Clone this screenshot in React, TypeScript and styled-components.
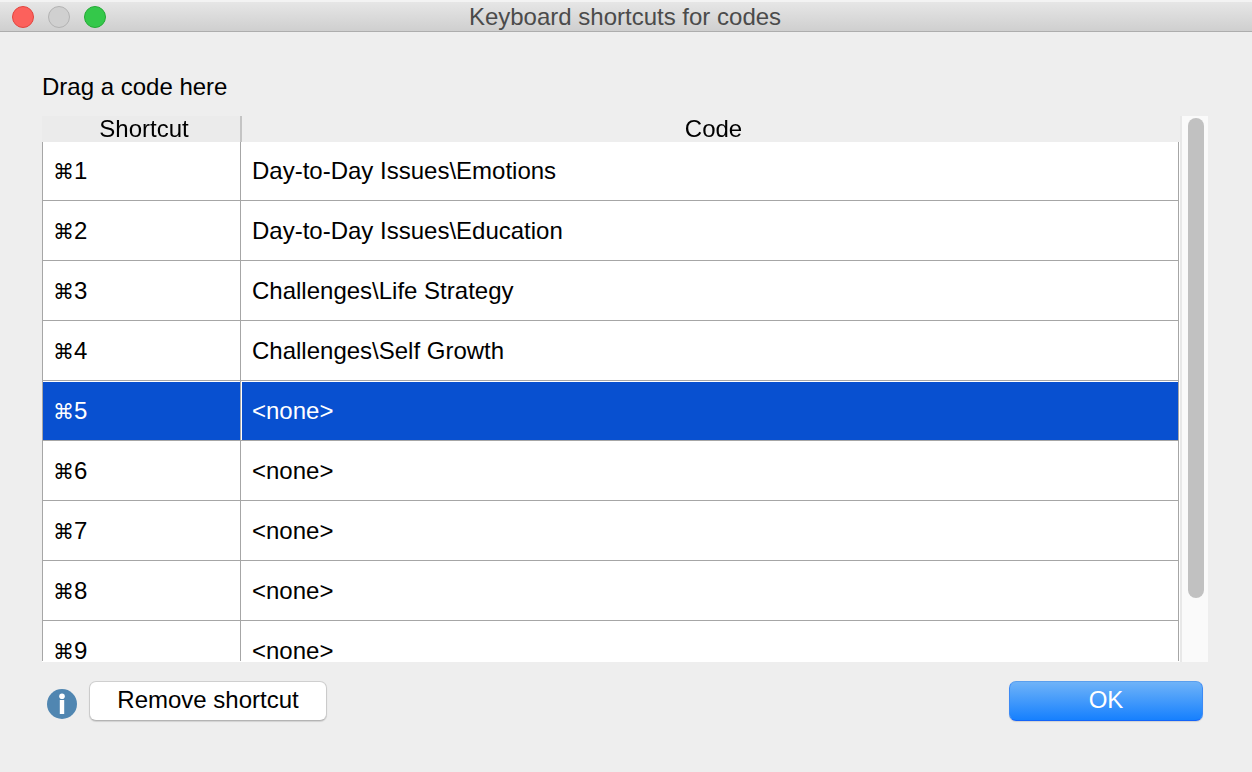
import React, { useState } from "react";
import styled, { createGlobalStyle } from "styled-components";

const GlobalStyle = createGlobalStyle`
  *, *::before, *::after { box-sizing: border-box; }
  body {
    margin: 0;
    background: #eeeeee;
    color: #000000;
    font-family: "Liberation Sans", Arial, "DejaVu Sans", sans-serif;
    font-size: 24px;
    line-height: 28px;
  }
  button { font: inherit; }
`;

const Dialog = styled.main`
  display: flex;
  flex-direction: column;
  height: 100vh;
  min-height: 400px;
`;

const TitleBar = styled.header`
  display: grid;
  grid-template-columns: 1fr auto 1fr;
  align-items: center;
  flex: none;
  height: 32px;
  padding: 0 14px 0 12px;
  border-top: 2px solid #f3f3f3;
  border-bottom: 1px solid #adadad;
  background: linear-gradient(#e6e6e6, #cfcfcf);
`;

const WindowControls = styled.div`
  display: flex;
  gap: 14px;
`;

const WindowControl = styled.button<{ $fill: string; $edge: string }>`
  width: 22px;
  height: 22px;
  padding: 0;
  border: 1px solid ${(p) => p.$edge};
  border-radius: 50%;
  background: ${(p) => p.$fill};
`;

const Title = styled.h1`
  margin: 0;
  color: #4b4b4b;
  font-size: 24px;
  font-weight: 400;
  line-height: 28px;
`;

const Content = styled.section`
  display: flex;
  flex: 1;
  flex-direction: column;
  min-height: 0;
  padding: 41px 44px 51px 42px;
`;

const Hint = styled.p`
  margin: 0 0 15px;
`;

const ListFrame = styled.div`
  display: flex;
  flex: 1;
  min-height: 0;
`;

const ListPane = styled.div`
  flex: 1;
  min-width: 0;
  overflow-y: auto;
  scrollbar-width: none;
  border-bottom: 1px solid #ffffff;
  background: linear-gradient(#eeeeee 26px, #ffffff 26px);
`;

const ScrollTrack = styled.div`
  flex: none;
  width: 28px;
  padding: 0 4px 0 6px;
  border-left: 2px solid #e8e8e8;
  background: #fafafa;
`;

const ScrollThumb = styled.div`
  height: 88%;
  margin-top: 2px;
  border-radius: 8px;
  background: #c1c1c1;
`;

const Table = styled.table`
  width: calc(100% - 1px);
  border-collapse: separate;
  border-spacing: 0;
  table-layout: fixed;
`;

const HeadCell = styled.th<{ $first?: boolean }>`
  position: sticky;
  top: 0;
  width: ${(p) => (p.$first ? "199px" : "auto")};
  height: 26px;
  padding: 0 0 0 6px;
  border: 0 solid #c4c4c4;
  border-width: ${(p) => (p.$first ? "0 1px 0 0" : "0 0 0 1px")};
  background: ${(p) => (p.$first ? "#ebebeb" : "#eeeeee")};
  font-weight: 400;
  line-height: 26px;
  text-align: center;
`;

const Cell = styled.td`
  height: 60px;
  padding: 1px 11px 0;
  border: 0 solid #a6a6a6;
  border-width: 0 1px 1px 0;
  box-shadow: inset 1px 1px #ffffff;

  &:first-child {
    padding-left: 10px;
    border-left-width: 1px;
    box-shadow: inset 0 1px #ffffff;
  }
`;

const Row = styled.tr<{ $selected: boolean }>`
  background: ${(p) => (p.$selected ? "#0850d0" : "#ffffff")};
  color: ${(p) => (p.$selected ? "#ffffff" : "#000000")};

  &:first-child ${Cell} {
    height: 59px;
    padding-top: 0;
  }
`;

const CommandKey = styled.span`
  font-family: "DejaVu Sans", sans-serif;
  font-size: 21px;
`;

const Footer = styled.footer`
  display: flex;
  align-items: center;
  flex: none;
  padding: 19px 5px 0;
`;

const InfoIcon = styled.svg`
  flex: none;
  width: 30px;
  height: 30px;
  margin: 6px 12px 0 0;
`;

const PushButton = styled.button<{ $primary?: boolean }>`
  width: ${(p) => (p.$primary ? "194px" : "238px")};
  height: 40px;
  margin-left: ${(p) => (p.$primary ? "auto" : "0")};
  padding: 0 0 2px;
  border: 1px solid;
  border-color: ${(p) =>
    p.$primary ? "#5a9fee #3c8af5 #1464f8" : "#cfcfcf #cbcbcb #b4b4b4"};
  border-radius: 7px;
  background: ${(p) =>
    p.$primary ? "linear-gradient(#6fb3f8, #1680fe)" : "#ffffff"};
  box-shadow: 0 1px 1px rgba(0, 0, 0, 0.12);
  color: ${(p) => (p.$primary ? "#ffffff" : "#000000")};
`;

const shortcuts = [
  { key: 1, code: "Day-to-Day Issues\\Emotions" },
  { key: 2, code: "Day-to-Day Issues\\Education" },
  { key: 3, code: "Challenges\\Life Strategy" },
  { key: 4, code: "Challenges\\Self Growth" },
  { key: 5, code: "<none>" },
  { key: 6, code: "<none>" },
  { key: 7, code: "<none>" },
  { key: 8, code: "<none>" },
  { key: 9, code: "<none>" },
];

export default function App() {
  const [selected, setSelected] = useState(5);

  return (
    <>
      <GlobalStyle />
      <Dialog>
        <TitleBar>
          <WindowControls>
            <WindowControl aria-label="Close" $fill="#fc615c" $edge="#e2453f" />
            <WindowControl aria-label="Minimize" $fill="#d0d0d0" $edge="#b3b3b3" />
            <WindowControl aria-label="Zoom" $fill="#34c84a" $edge="#24aa35" />
          </WindowControls>
          <Title>Keyboard shortcuts for codes</Title>
        </TitleBar>
        <Content>
          <Hint id="list-hint">Drag a code here</Hint>
          <ListFrame>
            <ListPane>
              <Table aria-labelledby="list-hint">
                <thead>
                  <tr>
                    <HeadCell scope="col" $first>Shortcut</HeadCell>
                    <HeadCell scope="col">Code</HeadCell>
                  </tr>
                </thead>
                <tbody>
                  {shortcuts.map(({ key, code }) => (
                    <Row
                      key={key}
                      $selected={key === selected}
                      aria-selected={key === selected}
                      onClick={() => setSelected(key)}
                    >
                      <Cell><CommandKey>⌘</CommandKey>{key}</Cell>
                      <Cell>{code}</Cell>
                    </Row>
                  ))}
                </tbody>
              </Table>
            </ListPane>
            <ScrollTrack>
              <ScrollThumb />
            </ScrollTrack>
          </ListFrame>
          <Footer>
            <InfoIcon viewBox="0 0 30 30" aria-hidden="true">
              <circle cx="15" cy="15" r="15" fill="#5086b1" />
              <circle cx="15" cy="7.2" r="2.8" fill="#ffffff" />
              <rect x="12.8" y="11" width="4.4" height="14" fill="#ffffff" />
            </InfoIcon>
            <PushButton type="button">Remove shortcut</PushButton>
            <PushButton type="button" $primary>OK</PushButton>
          </Footer>
        </Content>
      </Dialog>
    </>
  );
}
